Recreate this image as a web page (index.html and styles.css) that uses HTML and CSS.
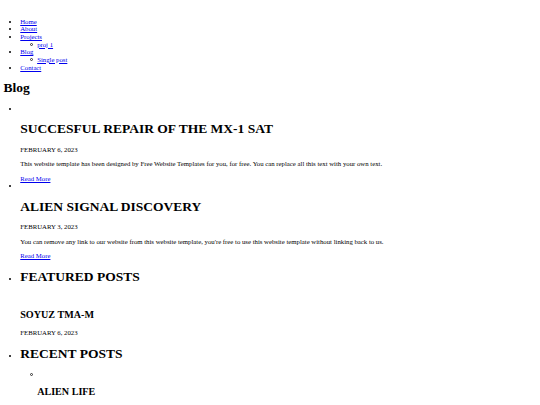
FILE: index.html
```html
<!DOCTYPE html>
<html lang="en">
<head>
<meta charset="utf-8">
<title>Blog</title>
<link rel="stylesheet" href="styles.css">
</head>
<body class="page">
<div class="header">
  <a class="logo" href="#"><span class="pic"></span></a>
  <ul class="list nav">
    <li><a href="#">Home</a></li>
    <li><a href="#">About</a></li>
    <li><a href="#">Projects</a>
      <ul class="sub"><li><a href="#">proj 1</a></li></ul>
    </li>
    <li><a href="#">Blog</a>
      <ul class="sub"><li><a href="#">Single post</a></li></ul>
    </li>
    <li><a href="#">Contact</a></li>
  </ul>
</div>
<div class="body">
  <h1 class="big">Blog</h1>
  <ul class="list posts">
    <li>
      <a class="thumb" href="#"><span class="pic"></span></a>
      <h1 class="big">SUCCESFUL REPAIR OF THE MX-1 SAT</h1>
      <p class="txt">FEBRUARY 6, 2023</p>
      <p class="txt">This website template has been designed by Free Website Templates for you, for free. You can replace all this text with your own text.</p>
      <a href="#">Read More</a>
    </li>
    <li>
      <a class="thumb" href="#"><span class="pic"></span></a>
      <h1 class="big">ALIEN SIGNAL DISCOVERY</h1>
      <p class="txt">FEBRUARY 3, 2023</p>
      <p class="txt">You can remove any link to our website from this website template, you're free to use this website template without linking back to us.</p>
      <a href="#">Read More</a>
    </li>
  </ul>
  <ul class="list sidebar">
    <li>
      <h1 class="big">FEATURED POSTS</h1>
      <a class="thumb" href="#"><span class="pic"></span></a>
      <h2 class="mid">SOYUZ TMA-M</h2>
      <p class="txt">FEBRUARY 6, 2023</p>
    </li>
    <li>
      <h1 class="big">RECENT POSTS</h1>
      <ul class="sub">
        <li>
          <a class="thumb" href="#"><span class="pic"></span></a>
          <h2 class="mid">ALIEN LIFE</h2>
        </li>
      </ul>
    </li>
  </ul>
</div>
</body>
</html>
```
FILE: styles.css
```css
.page {
  margin: 3.375px;
  font-family: "Liberation Serif", "Times New Roman", serif;
  font-size: 6.75px;
  line-height: 7.62px;
  color: #000;
  background: #fff;
}
.page a {
  color: #0000ee;
}
.logo,
.thumb {
  display: block;
}
.pic {
  display: inline-block;
  width: 0;
  height: 0;
}
.list {
  margin: 6.75px 0;
  padding-left: 16.875px;
  list-style-type: disc;
}
.sub {
  margin: 0;
  padding-left: 16.875px;
  list-style: none;
}
.sub > li::before {
  content: "";
  display: inline-block;
  box-sizing: border-box;
  width: 3px;
  height: 3px;
  border: 0.7px solid #333;
  border-radius: 50%;
  margin-left: -7.5px;
  margin-right: 4.5px;
  vertical-align: 0.5px;
}
.sub .thumb {
  display: inline;
}
.big {
  font-size: 13.5px;
  line-height: 15.5px;
  font-weight: bold;
  margin: 9px 0;
}
.mid {
  font-size: 10.125px;
  line-height: 11.6px;
  font-weight: bold;
  margin: 8.4px 0;
}
.txt {
  margin: 6.75px 0;
}
```
